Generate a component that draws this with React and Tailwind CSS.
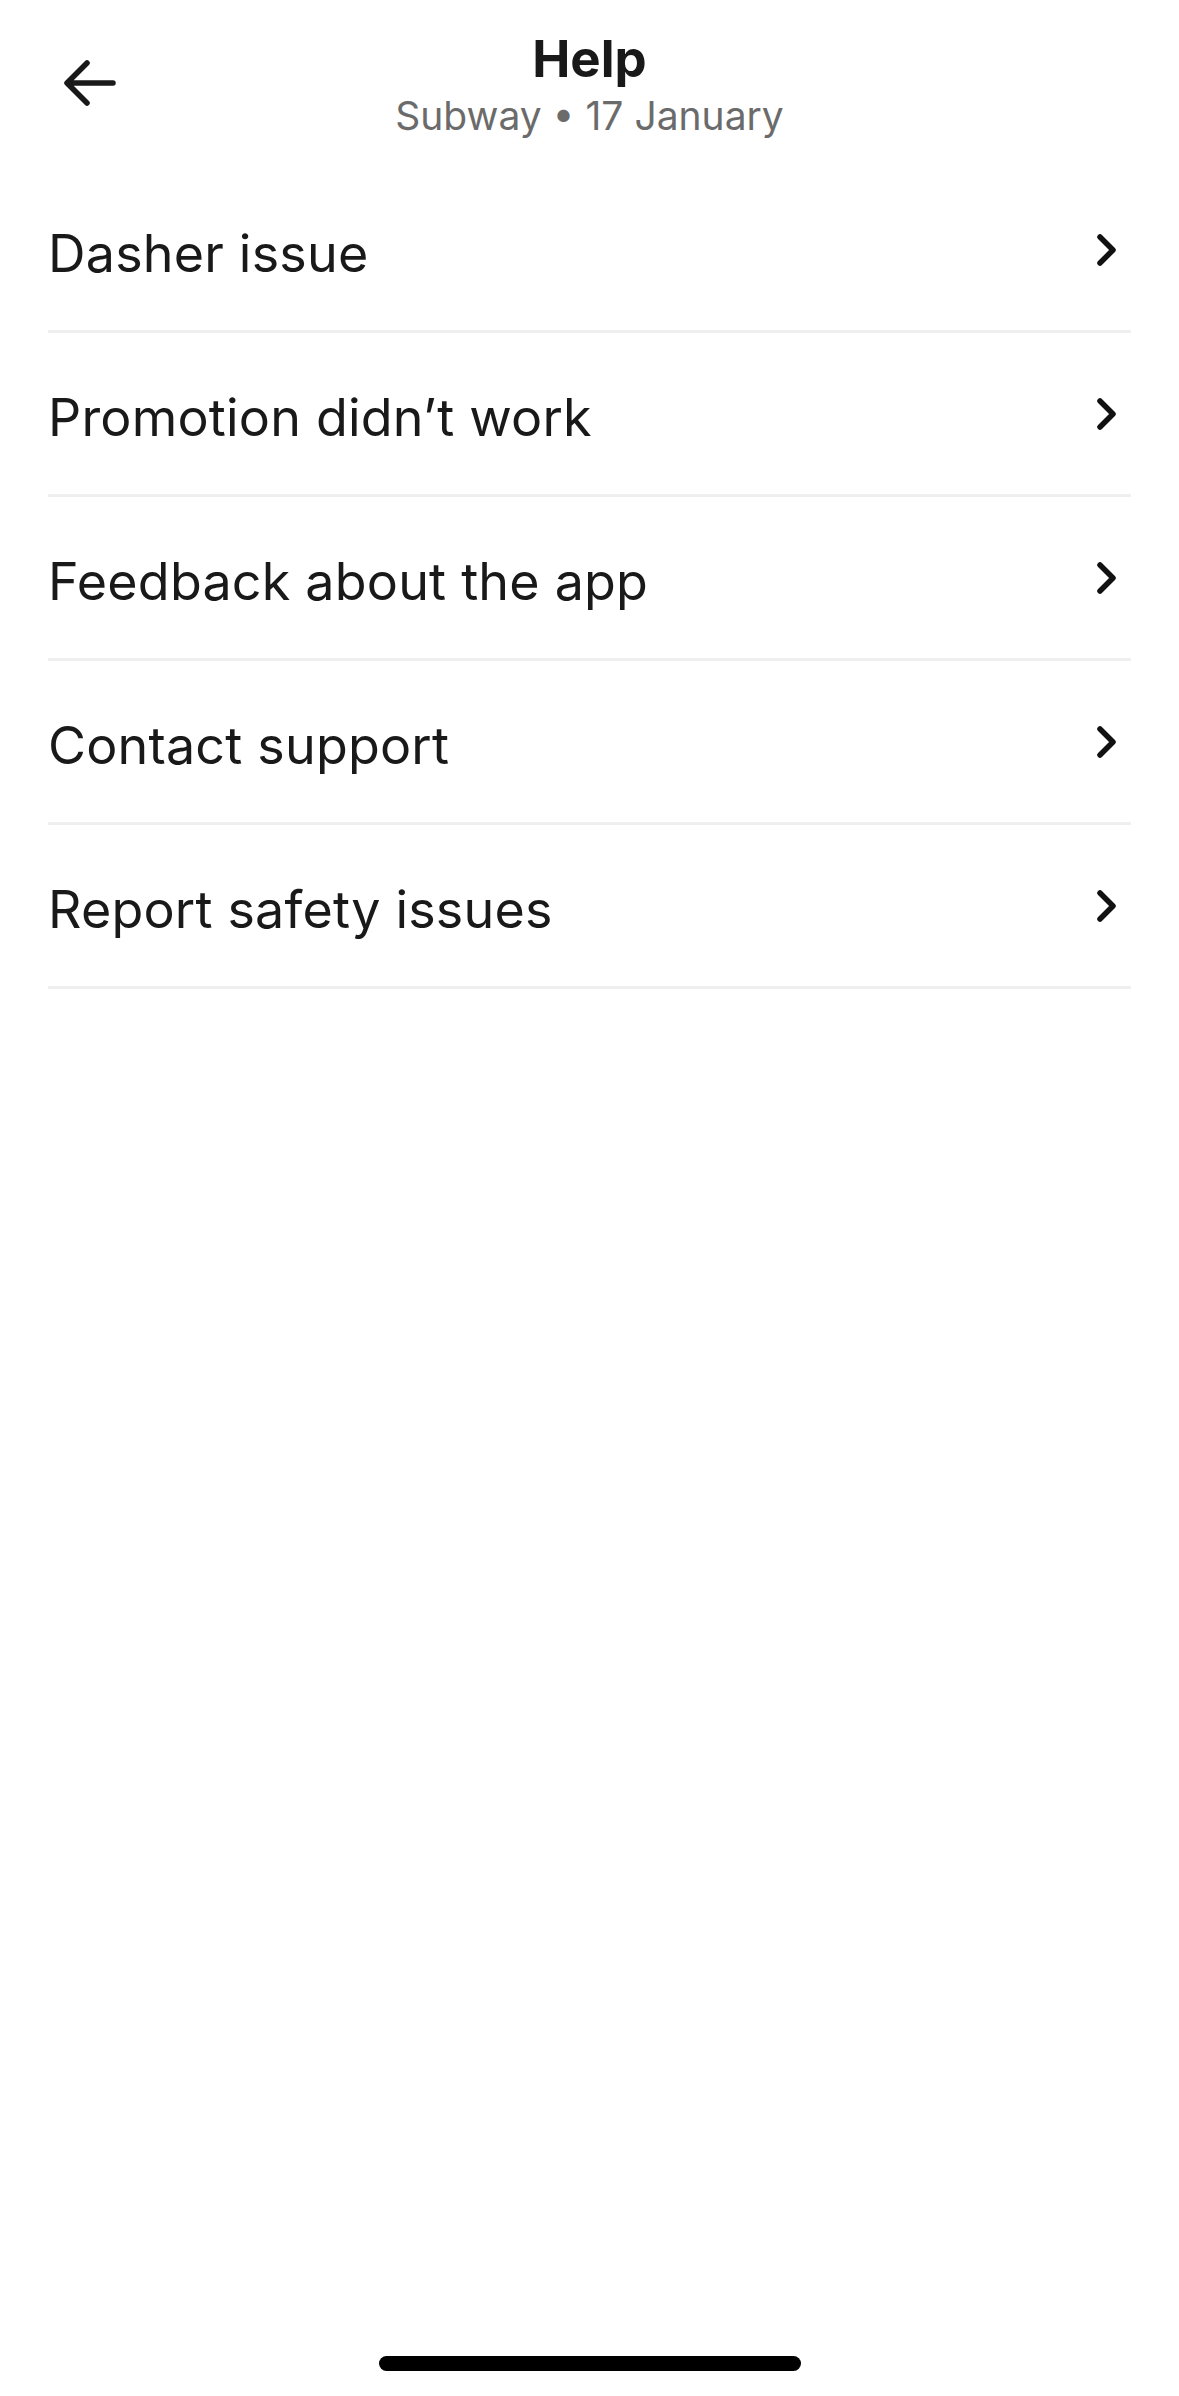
import React from "react";

const items = [
  "Dasher issue",
  "Promotion didn’t work",
  "Feedback about the app",
  "Contact support",
  "Report safety issues",
];

const BackArrow = () => (
  <svg width="56" height="50" viewBox="0 0 56 50" fill="none">
    <path
      d="M51 25H6M25 5L5 25L25 45"
      stroke="#191919"
      strokeWidth="5.5"
      strokeLinecap="round"
      strokeLinejoin="round"
    />
  </svg>
);

const Chevron = () => (
  <svg width="24" height="34" viewBox="0 0 24 34" fill="none">
    <path
      d="M5 4L18 17L5 30"
      stroke="#111111"
      strokeWidth="5.5"
      strokeLinecap="round"
      strokeLinejoin="round"
    />
  </svg>
);

const App = () => {
  return (
    <div className="h-[2396px] bg-white flex flex-col font-['Inter',sans-serif] text-[#191919]">
      {/* header */}
      <div className="h-[169px] grid grid-cols-[1fr_auto_1fr] items-start">
        <div className="pl-[62px] pt-[58px]">
          <BackArrow />
        </div>
        <div className="flex flex-col items-center pt-[30px]">
          <h1 className="text-[51px] font-bold leading-[58px]">Help</h1>
          <p className="text-[39px] leading-[46px] text-[#6b6b6b] mt-[5px]">
            Subway • 17 January
          </p>
        </div>
        <div />
      </div>

      {/* list */}
      <div className="mx-[48px] flex flex-col">
        {items.map((item, index) => (
          <div
            key={index}
            className="h-[164px] flex items-center justify-between border-b-[3px] border-[#efefef]"
          >
            <span className="text-[52px] leading-none pt-[8px] tracking-[0.2px]">{item}</span>
            <div className="pr-[12px]">
              <Chevron />
            </div>
          </div>
        ))}
      </div>

      <div className="mt-auto mb-[25px] self-center w-[422px] h-[15px] rounded-full bg-black" />
    </div>
  );
};

export default App;
